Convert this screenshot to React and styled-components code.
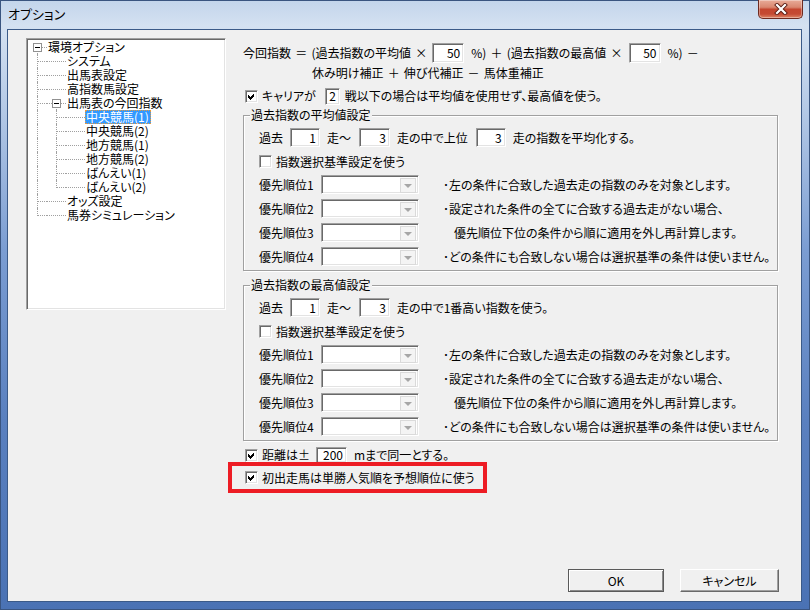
import React from 'react';
import styled, { createGlobalStyle, css } from 'styled-components';

const GlobalStyle = createGlobalStyle`
  html, body {
    margin: 0;
    padding: 0;
    background: #ffffff;
  }
  body {
    font-family: "Noto Sans CJK JP", "Noto Sans", sans-serif;
    font-size: 12px;
    color: #000;
  }
  * {
    box-sizing: border-box;
  }
`;

const sunken = css`
  border: 1px solid;
  border-color: #a0a0a0 #ffffff #ffffff #a0a0a0;
  box-shadow: inset 1px 1px 0 #696969, inset -1px -1px 0 #e3e3e3;
`;

const Window = styled.div`
  width: 810px;
  height: 610px;
  display: flex;
  flex-direction: column;
  background: linear-gradient(to bottom, #c3d5eb 0px, #d4e1f1 26px, #b4c9e6 110px, #7b9dd2 250px, #5a80bf 420px, #4a72b4 100%);
  box-shadow: inset 0 0 0 1px #3a5580;
  font-feature-settings: "palt";
`;

const TitleBar = styled.div`
  height: 29px;
  display: flex;
  justify-content: space-between;
  align-items: flex-start;
  padding: 0 7px 0 8px;
`;

const Caption = styled.div`
  font-size: 13px;
  line-height: 28px;
`;

const CloseButton = styled.div`
  width: 45px;
  height: 19px;
  border: 1px solid #6e2a20;
  border-top: none;
  border-radius: 0 0 5px 5px;
  background: linear-gradient(to bottom, #e8ab98 0%, #d98770 40%, #c4462f 52%, #c54a33 78%, #dd8566 100%);
  box-shadow: inset 0 0 0 1px rgba(255, 255, 255, 0.35);
  display: flex;
  align-items: center;
  justify-content: center;
`;

const FrameBody = styled.div`
  flex: 1;
  display: flex;
  padding: 0 8px 8px 7px;
`;

const Client = styled.div`
  flex: 1;
  display: flex;
  flex-direction: column;
  background: #f0f0f0;
  border: 1px solid #3b5a88;
  padding: 8px 22px 9px 18px;
`;

const TopRow = styled.div`
  display: flex;
  align-items: flex-start;
`;

/* ---------- tree ---------- */

const Tree = styled.div`
  width: 200px;
  height: 272px;
  background: #fff;
  ${sunken};
  padding: 1px 0 0 1px;
`;

const TreeRow = styled.div`
  display: flex;
  height: 14px;
  line-height: 14px;
  white-space: nowrap;
`;

const Cell = styled.span`
  position: relative;
  width: 19px;
  height: 14px;
  flex: none;

  &::before {
    content: '';
    position: absolute;
    left: 9px;
    border-left: 1px dotted #a0a0a0;
    display: ${p => (p.$v ? 'block' : 'none')};
    top: ${p => (p.$v === 'bottom' ? '7px' : '0')};
    height: ${p => (p.$v === 'top' ? '8px' : p.$v === 'bottom' ? '7px' : '14px')};
  }

  &::after {
    content: '';
    position: absolute;
    top: 7px;
    right: 0;
    border-top: 1px dotted #a0a0a0;
    display: ${p => (p.$h ? 'block' : 'none')};
    left: ${p => (p.$h === 'full' ? '0' : '10px')};
  }
`;

const Expander = styled.span`
  position: absolute;
  left: 5px;
  top: 3px;
  width: 9px;
  height: 9px;
  border: 1px solid #919191;
  background: #fff;
  z-index: 1;

  &::after {
    content: '';
    position: absolute;
    left: 1px;
    top: 3px;
    width: 5px;
    height: 1px;
    background: #000;
  }
`;

const TreeLabel = styled.span`
  display: inline-block;
  padding: 0 2px 0 1px;
  height: 14px;
  ${p => p.$selected && css`
    background: #3399ff;
    color: #fff;
    outline: 1px dotted #e89a3c;
    outline-offset: -1px;
  `}
`;

const CELL_SETS = {
  root: [{ v: 'bottom', h: 'right', exp: true }],
  leaf1: [{ v: 'full', h: 'right' }, { h: 'full' }],
  last1: [{ v: 'top', h: 'right' }, { h: 'full' }],
  open1: [{ v: 'full', h: 'right' }, { v: 'bottom', h: 'full', exp: true }],
  leaf2: [{ v: 'full' }, { v: 'full', h: 'right' }, { h: 'full' }],
  last2: [{ v: 'full' }, { v: 'top', h: 'right' }, { h: 'full' }],
};

const treeItems = [
  { label: '環境オプション', cells: 'root' },
  { label: 'システム', cells: 'leaf1' },
  { label: '出馬表設定', cells: 'leaf1' },
  { label: '高指数馬設定', cells: 'leaf1' },
  { label: '出馬表の今回指数', cells: 'open1' },
  { label: '中央競馬(1)', cells: 'leaf2', selected: true },
  { label: '中央競馬(2)', cells: 'leaf2' },
  { label: '地方競馬(1)', cells: 'leaf2' },
  { label: '地方競馬(2)', cells: 'leaf2' },
  { label: 'ばんえい(1)', cells: 'leaf2' },
  { label: 'ばんえい(2)', cells: 'last2' },
  { label: 'オッズ設定', cells: 'leaf1' },
  { label: '馬券シミュレーション', cells: 'last1' },
];

/* ---------- right panel ---------- */

const Panel = styled.div`
  margin: 5px 0 0 17px;
  display: flex;
  flex-direction: column;
`;

const Line = styled.div`
  display: flex;
  align-items: center;
  height: ${p => p.$h}px;
  margin-top: ${p => p.$mt || 0}px;
  padding-left: ${p => p.$pl || 0}px;
  white-space: pre;
  line-height: 14px;
  word-spacing: ${p => p.$ws || 0}px;
`;

const Text = styled.span`
  white-space: pre;
`;

const NumBox = styled.span`
  ${sunken};
  background: #fff;
  width: ${p => p.$w}px;
  height: ${p => p.$h}px;
  flex: none;
  display: inline-flex;
  align-items: center;
  justify-content: flex-end;
  padding-right: 3px;
  margin: 0 ${p => p.$mr ?? 6}px 0 ${p => p.$ml ?? 6}px;
  line-height: 1;
  word-spacing: 0;
`;

const CheckBox = styled.span`
  ${sunken};
  background: #fff;
  width: 13px;
  height: 13px;
  flex: none;
  margin: 0 4px 0 ${p => p.$ml ?? 2}px;
  display: inline-flex;
`;

const Group = styled.div`
  position: relative;
  width: 535px;
  margin-top: ${p => p.$mt}px;
  border: 1px solid #a0a0a0;
  box-shadow: 1px 1px 0 #ffffff, inset 1px 1px 0 #ffffff;
  padding: 12px 0 4px 15px;
  display: flex;
  flex-direction: column;
`;

const Legend = styled.span`
  position: absolute;
  top: -8px;
  left: 6px;
  padding: 0 1px;
  background: #f0f0f0;
  line-height: 14px;
`;

const ComboRow = styled.div`
  display: flex;
  align-items: center;
  height: 19px;
  margin-top: ${p => p.$mt}px;
  line-height: 14px;
  white-space: pre;
`;

const ComboLabel = styled.span`
  width: 62px;
  flex: none;
`;

const Combo = styled.span`
  ${sunken};
  background: #fff;
  width: 98px;
  height: 19px;
  flex: none;
  display: flex;
  justify-content: flex-end;
  padding: 2px;
`;

const DropButton = styled.span`
  width: 16px;
  height: 15px;
  background: #f4f4f4;
  border: 1px solid #dadada;
  display: flex;
  align-items: center;
  justify-content: center;

  &::after {
    content: '';
    border-left: 4px solid transparent;
    border-right: 4px solid transparent;
    border-top: 4px solid #a6a6a6;
  }
`;

const Desc = styled.span`
  margin-left: ${p => 24 + (p.$indent || 0)}px;
`;

const Highlight = styled.div`
  width: 259px;
  height: 31px;
  margin: -1px 0 0 -15px;
  border: 4px solid #ed1c24;
  padding-left: 11px;
  display: flex;
  align-items: center;
  white-space: pre;
  line-height: 14px;
`;

/* ---------- footer ---------- */

const Footer = styled.div`
  margin-top: auto;
  display: flex;
  justify-content: flex-end;
  gap: 16px;
`;

const Button = styled.button`
  width: ${p => p.$w}px;
  height: 23px;
  font: inherit;
  font-size: 12px;
  color: #000;
  background: #f0f0f0;
  border: 1px solid;
  border-color: #ffffff #696969 #696969 #ffffff;
  box-shadow: inset -1px -1px 0 #a0a0a0;
  padding: 0;
  ${p => p.$default && css`
    border-color: #5a5a5a;
    box-shadow: inset 1px 1px 0 #ffffff, inset -1px -1px 0 #8a8a8a;
  `}
`;

const descLines = [
  { text: '･左の条件に合致した過去走の指数のみを対象とします。' },
  { text: '･設定された条件の全てに合致する過去走がない場合、' },
  { text: '優先順位下位の条件から順に適用を外し再計算します。', indent: 11 },
  { text: '･どの条件にも合致しない場合は選択基準の条件は使いません。' },
];

const CheckMark = () => (
  <svg width="11" height="11" viewBox="0 0 11 11" shapeRendering="crispEdges">
    <polygon points="2,4 4,6 8,2 8,5 4,9 2,7" fill="#000" />
  </svg>
);

const CloseIcon = () => (
  <svg width="14" height="12" viewBox="0 0 14 12">
    <path d="M3 2 L11 10 M11 2 L3 10" stroke="#5a1c14" strokeWidth="4" strokeLinecap="square" />
    <path d="M3 2 L11 10 M11 2 L3 10" stroke="#ffffff" strokeWidth="2.2" strokeLinecap="square" />
  </svg>
);

const PriorityRows = () => (
  <>
    {descLines.map((d, i) => (
      <ComboRow key={i} $mt={i === 0 ? 6 : 5}>
        <ComboLabel>{`優先順位${i + 1}`}</ComboLabel>
        <Combo><DropButton /></Combo>
        <Desc $indent={d.indent}>{d.text}</Desc>
      </ComboRow>
    ))}
  </>
);

const SettingGroup = ({ title, mt, children }) => (
  <Group $mt={mt}>
    <Legend>{title}</Legend>
    <Line $h={19}>
      <Text>過去</Text>
      <NumBox $w={30} $h={19} $ml={7} $mr={7}>1</NumBox>
      <Text>走～</Text>
      <NumBox $w={31} $h={19} $ml={8} $mr={7}>3</NumBox>
      {children}
    </Line>
    <Line $h={15} $mt={7}>
      <CheckBox $ml={0} />
      <Text>指数選択基準設定を使う</Text>
    </Line>
    <PriorityRows />
  </Group>
);

export default function App() {
  return (
    <>
      <GlobalStyle />
      <Window>
        <TitleBar>
          <Caption>オプション</Caption>
          <CloseButton><CloseIcon /></CloseButton>
        </TitleBar>
        <FrameBody>
          <Client>
            <TopRow>
              <Tree>
                {treeItems.map(item => (
                  <TreeRow key={item.label}>
                    {CELL_SETS[item.cells].map((c, i) => (
                      <Cell key={i} $v={c.v} $h={c.h}>
                        {c.exp && <Expander />}
                      </Cell>
                    ))}
                    <TreeLabel $selected={item.selected}>{item.label}</TreeLabel>
                  </TreeRow>
                ))}
              </Tree>
              <Panel>
                <Line $h={20} $ws={1.5}>
                  <Text>今回指数 ＝ (過去指数の平均値 ×</Text>
                  <NumBox $w={32} $h={20} $ml={5} $mr={7}>50</NumBox>
                  <Text>%) ＋ (過去指数の最高値 ×</Text>
                  <NumBox $w={32} $h={20} $ml={6} $mr={7}>50</NumBox>
                  <Text>%) －</Text>
                </Line>
                <Line $h={14} $mt={3} $pl={69} $ws={1.5}>
                  <Text>休み明け補正 ＋ 伸び代補正 － 馬体重補正</Text>
                </Line>
                <Line $h={18} $mt={7}>
                  <CheckBox><CheckMark /></CheckBox>
                  <Text>キャリアが</Text>
                  <NumBox $w={15} $h={17} $ml={9} $mr={5}>2</NumBox>
                  <Text>戦以下の場合は平均値を使用せず、最高値を使う。</Text>
                </Line>

                <SettingGroup title="過去指数の平均値設定" mt={10}>
                  <Text>走の中で上位</Text>
                  <NumBox $w={30} $h={19} $ml={8} $mr={7}>3</NumBox>
                  <Text>走の指数を平均化する。</Text>
                </SettingGroup>

                <SettingGroup title="過去指数の最高値設定" mt={14}>
                  <Text>走の中で1番高い指数を使う。</Text>
                </SettingGroup>

                <Line $h={16} $mt={6}>
                  <CheckBox><CheckMark /></CheckBox>
                  <Text>距離は±</Text>
                  <NumBox $w={31} $h={16} $ml={6} $mr={7}>200</NumBox>
                  <Text>mまで同一とする。</Text>
                </Line>
                <Highlight>
                  <CheckBox><CheckMark /></CheckBox>
                  <Text>初出走馬は単勝人気順を予想順位に使う</Text>
                </Highlight>
              </Panel>
            </TopRow>
            <Footer>
              <Button $default $w={96}>OK</Button>
              <Button $w={99}>キャンセル</Button>
            </Footer>
          </Client>
        </FrameBody>
      </Window>
    </>
  );
}
